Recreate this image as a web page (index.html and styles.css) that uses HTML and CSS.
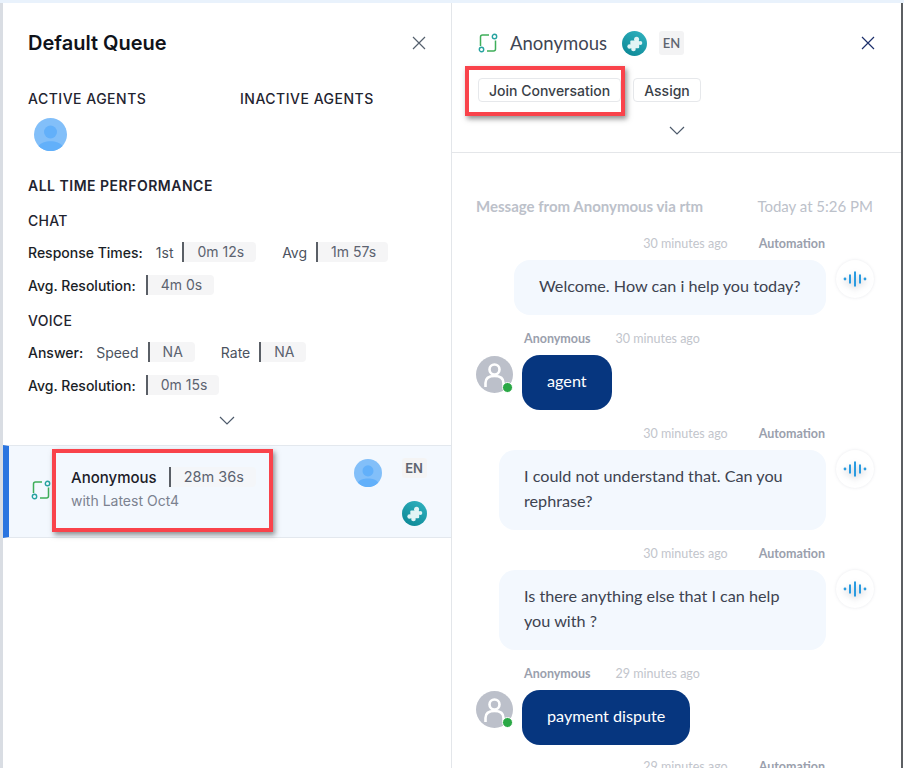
FILE: index.html
```html
<!DOCTYPE html>
<html>
<head>
    <title>Default Queue</title>
    <link rel="stylesheet" href="styles.css">
</head>
<body>
    <svg width="0" height="0" class="defs">
        <defs>
            <linearGradient id="teal" x1="0.8" y1="0" x2="0.2" y2="1">
                <stop offset="0" stop-color="#2fb0bd"/>
                <stop offset="1" stop-color="#0c8896"/>
            </linearGradient>
        </defs>
        <symbol id="channel" viewBox="0 0 20 20">
            <path d="M2.500 13 V4 Q2.500 2 4.500 2 H11" fill="none" stroke="#3fae5a" stroke-width="1.500"/>
            <path d="M17.500 7.500 V16 Q17.500 18 15.500 18 H9" fill="none" stroke="#3fae5a" stroke-width="1.500"/>
            <circle cx="16.500" cy="3.500" r="2.200" fill="none" stroke="#27a3a0" stroke-width="1.400"/>
            <circle cx="3.500" cy="16.500" r="2.200" fill="none" stroke="#27a3a0" stroke-width="1.400"/>
        </symbol>
        <symbol id="puzzle" viewBox="0 0 24 24">
            <circle cx="12" cy="12" r="12" fill="url(#teal)"/>
            <g fill="#e2f4f5">
                <rect x="8" y="9" width="8.500" height="7.500" rx="1"/>
                <circle cx="14" cy="7.800" r="2.400"/>
                <circle cx="17.500" cy="11.500" r="2"/>
                <circle cx="7.300" cy="14.800" r="2.200"/>
                <circle cx="11" cy="17.200" r="2.200"/>
            </g>
        </symbol>
        <symbol id="agent" viewBox="0 0 33 33">
            <circle cx="16.500" cy="16.500" r="16.500" fill="#82bff9"/>
            <circle cx="16.500" cy="14" r="6.500" fill="#62b0fa"/>
            <path d="M4.500 28 C8 21.500 25 21.500 28.500 28 A16.500 16.500 0 0 1 4.500 28 Z" fill="#62b0fa"/>
        </symbol>
        <symbol id="user" viewBox="0 0 37 37">
            <circle cx="18.500" cy="18.500" r="18.500" fill="#bcc0ca"/>
            <circle cx="18.500" cy="13.500" r="5" fill="none" stroke="#fff" stroke-width="2.600"/>
            <path d="M9.500 31 V27 C9.500 22 13 20 18.500 20 C24 20 27.500 22 27.500 27 V31" fill="none" stroke="#fff" stroke-width="2.600"/>
        </symbol>
        <symbol id="wave" viewBox="0 0 24 16">
            <circle cx="2" cy="8" r="1.400" fill="#2a9be0"/>
            <circle cx="22" cy="8" r="1.400" fill="#2a9be0"/>
            <path d="M7 3.500 V12.500 M12 0.500 V15.500 M17 3.500 V12.500" fill="none" stroke="#2a9be0" stroke-width="2"/>
        </symbol>
        <symbol id="cross" viewBox="0 0 14 14">
            <path d="M1 1 L13 13 M13 1 L1 13" fill="none" stroke="currentColor" stroke-width="1.200"/>
        </symbol>
        <symbol id="chevron" viewBox="0 0 16 9">
            <path d="M1 1 L8 8 L15 1" fill="none" stroke="#4d5a6b" stroke-width="1.200"/>
        </symbol>
    </svg>

    <div class="app">
        <!-- queue details -->
        <section class="queue">
            <div class="queue-head">
                <h1>Default Queue</h1>
                <svg class="close grey"><use href="#cross"/></svg>
            </div>
            <div class="agents">
                <div>
                    <div class="caps">ACTIVE AGENTS</div>
                    <svg class="agent-pic"><use href="#agent"/></svg>
                </div>
                <div class="caps">INACTIVE AGENTS</div>
            </div>
            <div class="caps bold perf">ALL TIME PERFORMANCE</div>

            <div class="group first">CHAT</div>
            <div class="stat">
                <b>Response Times:</b>
                <span class="lbl">1st</span><span class="chip">0m 12s</span>
                <span class="lbl second">Avg</span><span class="chip">1m 57s</span>
            </div>
            <div class="stat">
                <b class="tight">Avg. Resolution:</b><span class="chip">4m 0s</span>
            </div>

            <div class="group">VOICE</div>
            <div class="stat">
                <b>Answer:</b>
                <span class="lbl">Speed</span><span class="chip">NA</span>
                <span class="lbl second">Rate</span><span class="chip">NA</span>
            </div>
            <div class="stat">
                <b class="tight">Avg. Resolution:</b><span class="chip">0m 15s</span>
            </div>

            <div class="more"><svg class="chevron"><use href="#chevron"/></svg></div>

            <div class="item">
                <svg class="item-icon"><use href="#channel"/></svg>
                <div class="item-text">
                    <div class="item-name"><b>Anonymous</b><span class="chip">28m 36s</span></div>
                    <div class="item-sub">with Latest Oct4</div>
                </div>
                <svg class="item-agent"><use href="#agent"/></svg>
                <div class="item-side">
                    <span class="lang">EN</span>
                    <svg class="puzzle"><use href="#puzzle"/></svg>
                </div>
                <div class="mark mark-item"></div>
            </div>
        </section>

        <!-- conversation -->
        <section class="convo">
            <div class="convo-head">
                <div class="convo-title">
                    <svg class="title-icon"><use href="#channel"/></svg>
                    <span class="title-name">Anonymous</span>
                    <svg class="puzzle"><use href="#puzzle"/></svg>
                    <span class="lang">EN</span>
                    <svg class="close navy"><use href="#cross"/></svg>
                </div>
                <div class="actions">
                    <button class="btn">Join Conversation</button>
                    <button class="btn">Assign</button>
                </div>
                <div class="more-head"><svg class="chevron"><use href="#chevron"/></svg></div>
                <div class="mark mark-join"></div>
            </div>

            <div class="messages">
                <div class="intro">
                    <span class="via">Message from Anonymous via rtm</span>
                    <span class="today">Today at 5:26 PM</span>
                </div>

                <div class="meta bot-meta"><span class="ago">30 minutes ago</span><b>Automation</b></div>
                <div class="bot-row">
                    <div class="bubble bot short">Welcome. How can i help you today?</div>
                    <div class="voice"><svg><use href="#wave"/></svg></div>
                </div>

                <div class="meta user-meta"><b>Anonymous</b><span class="ago">30 minutes ago</span></div>
                <div class="user-row">
                    <div class="avatar"><svg><use href="#user"/></svg><i class="online"></i></div>
                    <div class="bubble user">agent</div>
                </div>

                <div class="meta bot-meta"><span class="ago">30 minutes ago</span><b>Automation</b></div>
                <div class="bot-row">
                    <div class="bubble bot">I could not understand that. Can you rephrase?</div>
                    <div class="voice"><svg><use href="#wave"/></svg></div>
                </div>

                <div class="meta bot-meta"><span class="ago">30 minutes ago</span><b>Automation</b></div>
                <div class="bot-row">
                    <div class="bubble bot">Is there anything else that I can help you with ?</div>
                    <div class="voice"><svg><use href="#wave"/></svg></div>
                </div>

                <div class="meta user-meta"><b>Anonymous</b><span class="ago">29 minutes ago</span></div>
                <div class="user-row">
                    <div class="avatar"><svg><use href="#user"/></svg><i class="online"></i></div>
                    <div class="bubble user">payment dispute</div>
                </div>

                <div class="meta bot-meta last-meta"><span class="ago">29 minutes ago</span><b>Automation</b></div>
            </div>
        </section>
    </div>
</body>
</html>
```

FILE: styles.css
```css
html, body {
    margin: 0;
    height: 100%;
    overflow: hidden;
}

body {
    background-color: #fff;
    font-family: Inter, "Liberation Sans", sans-serif;
    color: #1f2430;
}

.defs {
    position: absolute;
}

.app {
    display: flex;
    height: 765px;
    margin-top: 3px;
    overflow: hidden;
    box-shadow: 0 -3px 0 #e9f2fc;
}

/* left panel */
.queue {
    width: 448px;
    margin-left: 3px;
    box-shadow: -3px 0 0 #d9dde3;
    border-right: 1px solid #e3e6ea;
}

.queue-head {
    display: flex;
    justify-content: space-between;
    align-items: center;
    height: 26px;
    padding: 27px 25px 0 25px;
}

h1 {
    margin: 0;
    font-size: 20px;
    font-weight: 600;
    color: #10131a;
}

.close {
    width: 14px;
    height: 14px;
}
.grey {
    color: #55606e;
}
.navy {
    color: #1c2f6b;
    margin-left: auto;
    margin-right: 26px;
}

.agents {
    display: grid;
    grid-template-columns: 212px 1fr;
    padding: 35px 25px 0 25px;
}

.caps {
    font-size: 14px;
    line-height: 16px;
    font-weight: 500;
    letter-spacing: 0.5px;
    color: #1f2430;
}

.bold {
    font-weight: 600;
}

.agent-pic {
    display: block;
    width: 33px;
    height: 33px;
    margin: 11px 0 0 6px;
}

.perf {
    padding: 27px 25px 0 25px;
}

.group {
    padding: 18px 25px 0 25px;
    font-size: 14px;
    line-height: 16px;
    font-weight: 500;
    letter-spacing: 0.3px;
    color: #1f2430;
}
.first {
    padding-top: 19px;
}

.stat {
    display: flex;
    align-items: center;
    height: 20px;
    margin-top: 13px;
    padding: 0 25px;
    font-size: 14px;
    color: #4c5360;
}

.stat b {
    font-weight: 500;
    color: #1a1e26;
    margin-right: 13px;
}
.stat .tight {
    margin-right: 10px;
}

.lbl {
    margin-right: 9px;
}
.second {
    margin-left: 26px;
}

.chip {
    display: inline-block;
    height: 20px;
    line-height: 20px;
    padding: 0 12px 0 13px;
    border-left: 2px solid #5a5f66;
    border-radius: 0 4px 4px 0;
    background-color: #f5f5f6;
    font-size: 14px;
    color: #5c6370;
}

.more {
    display: flex;
    justify-content: center;
    padding-top: 21px;
    height: 29px;
}

.chevron {
    width: 16px;
    height: 9px;
}

/* queue item */
.item {
    position: relative;
    display: flex;
    height: 91px;
    border-top: 1px solid #e3e8ee;
    border-bottom: 1px solid #e3e8ee;
    border-left: 6px solid #2b75e0;
    background-color: #f3f8fe;
}

.item-icon {
    width: 20px;
    height: 20px;
    margin: 34px 0 0 22px;
}

.item-text {
    padding: 21px 0 0 20px;
    width: 283px;
}

.item-name {
    display: flex;
    align-items: center;
    font-size: 15px;
}
.item-name b {
    font-weight: 500;
    color: #1c2028;
    margin-right: 12px;
}
.item-name .chip {
    font-size: 14.500px;
    background-color: #f4f6f9;
}

.item-sub {
    margin-top: 5px;
    font-size: 14px;
    color: #7b8290;
}

.item-agent {
    width: 28px;
    height: 28px;
    margin-top: 13px;
}

.item-side {
    display: flex;
    flex-direction: column;
    align-items: center;
    width: 26px;
    margin: 12px 0 0 19px;
}

.lang {
    display: inline-block;
    width: 25px;
    height: 24px;
    line-height: 24px;
    text-align: center;
    border-radius: 3px;
    background-color: #f3f3f4;
    font-size: 13px;
    font-weight: 600;
    color: #5e6570;
}
.item-side .lang {
    height: 20px;
    line-height: 20px;
    background-color: #f4f4f4;
}

.puzzle {
    width: 25px;
    height: 25px;
}
.item-side .puzzle {
    margin-top: 23px;
}

/* red annotation boxes */
.mark {
    position: absolute;
    box-sizing: border-box;
    border: 4px solid #f9434b;
    box-shadow: 2px 3px 5px rgba(60, 60, 60, 0.55);
}
.mark-item {
    left: 43px;
    top: 3px;
    width: 221px;
    height: 83px;
}
.mark-join {
    left: 13px;
    top: 63px;
    width: 160px;
    height: 50px;
}

/* right panel */
.convo {
    width: 449px;
    border-right: 2px solid #5c5f63;
    font-family: Lato, "Liberation Sans", sans-serif;
}

.convo-head {
    position: relative;
    height: 149px;
    border-bottom: 1px solid #e4e6e9;
    padding-left: 26px;
}

.convo-title {
    display: flex;
    align-items: center;
    height: 24px;
    padding-top: 28px;
}

.title-icon {
    width: 20px;
    height: 20px;
}

.title-name {
    margin: 0 15px 0 12px;
    font-size: 18.500px;
    color: #3f4654;
}

.convo-title .lang {
    margin-left: 12px;
}

.actions {
    display: flex;
    gap: 12px;
    margin-top: 23px;
}

.btn {
    height: 24px;
    padding: 0 10px;
    background-color: #fff;
    border: 1px solid #e6e8eb;
    border-radius: 4px;
    font-family: Inter, "Liberation Sans", sans-serif;
    font-size: 14px;
    font-weight: 500;
    color: #3a3f48;
}

.more-head {
    padding: 17px 0 0 191px;
}

.messages {
    padding: 0 0 0 24px;
}

.intro {
    display: flex;
    justify-content: space-between;
    align-items: center;
    height: 20px;
    padding: 43px 28px 0 0;
}
.via {
    font-size: 15px;
    font-weight: 700;
    color: #bcc1ca;
}
.today {
    color: #bcc1ca;
    font-size: 15px;
}

.meta {
    display: flex;
    align-items: center;
    height: 16px;
    font-size: 12.500px;
}
.meta b {
    color: #9aa0ad;
    font-weight: 700;
}
.ago {
    color: #c2c5cc;
}

.bot-meta {
    justify-content: flex-end;
    gap: 31px;
    padding-right: 76px;
    margin: 15px 0 9px 0;
}
.intro + .bot-meta {
    margin-top: 19px;
}
.last-meta {
    margin-top: 13px;
}

.user-meta {
    padding-left: 48px;
    gap: 25px;
    margin: 15px 0 9px 0;
}

.bot-row {
    display: flex;
    justify-content: flex-end;
    align-items: flex-start;
    padding-right: 27px;
}

.bubble {
    box-sizing: border-box;
    font-size: 16.200px;
    line-height: 25px;
}

.bot {
    width: 327px;
    padding: 13px 25px 17px 25px;
    background-color: #f3f8fe;
    border-radius: 16px;
    color: #3d4350;
}
.short {
    width: 312px;
}

.voice {
    display: flex;
    justify-content: center;
    align-items: center;
    width: 38px;
    height: 38px;
    margin-left: 10px;
    border-radius: 50%;
    box-shadow: 0 0 3px rgba(120, 130, 150, 0.18);
}
.voice svg {
    width: 24px;
    height: 16px;
    filter: drop-shadow(0 3px 3px rgba(90, 100, 120, 0.4));
}

.user-row {
    display: flex;
    align-items: flex-start;
}

.avatar {
    position: relative;
    width: 37px;
    height: 37px;
    margin: 1px 9px 0 0;
}
.avatar svg {
    display: block;
    width: 37px;
    height: 37px;
}

.online {
    position: absolute;
    right: 0;
    bottom: 0;
    width: 9px;
    height: 9px;
    border: 1px solid #fff;
    border-radius: 50%;
    background-color: #2aa845;
}

.user {
    height: 55px;
    padding: 13px 25px;
    background-color: #06367f;
    border-radius: 18px;
    color: #fff;
}
```
